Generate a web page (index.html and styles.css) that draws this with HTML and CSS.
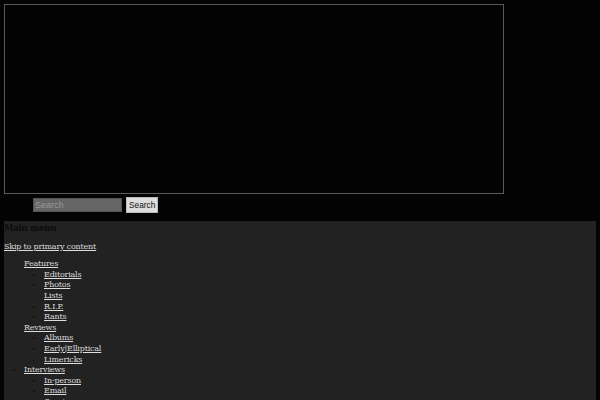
FILE: index.html
```html
<!DOCTYPE html>
<html>
<head>
<meta charset="utf-8">
<link rel="stylesheet" href="styles.css">
</head>
<body>
<div class="banner"></div>
<form class="search">
  <input class="search-input" type="text" placeholder="Search">
  <button class="search-btn" type="button">Search</button>
</form>
<nav class="menu">
  <h3 class="menu-title">Main menu</h3>
  <a class="skip" href="#">Skip to primary content</a>
  <ul class="top">
    <li><a href="#">Features</a>
      <ul class="sub">
        <li><a href="#">Editorials</a></li>
        <li><a href="#">Photos</a></li>
        <li><a href="#">Lists</a></li>
        <li><a href="#">R.I.P.</a></li>
        <li><a href="#">Rants</a></li>
      </ul>
    </li>
    <li><a href="#">Reviews</a>
      <ul class="sub">
        <li><a href="#">Albums</a></li>
        <li><a href="#">Early|Elliptical</a></li>
        <li><a href="#">Limericks</a></li>
      </ul>
    </li>
    <li><a href="#">Interviews</a>
      <ul class="sub">
        <li><a href="#">In-person</a></li>
        <li><a href="#">Email</a></li>
        <li><a href="#">On-air</a></li>
      </ul>
    </li>
  </ul>
</nav>
</body>
</html>
```
FILE: styles.css
```css
html, body {
  background: #030303;
}
body {
  margin: 4px;
  font-family: "DejaVu Serif", serif;
  font-size: 8px;
  letter-spacing: -0.2px;
  color: #111;
  overflow: hidden;
}
.banner {
  width: 498px;
  height: 188px;
  border: 1px solid #5a5a5a;
}
.search {
  display: flex;
  align-items: center;
  gap: 4px;
  padding-left: 29px;
  margin: 3px 0 8px;
}
.search-input {
  width: 89px;
  height: 14px;
  box-sizing: border-box;
  background: #666;
  border: 1px solid #555;
  padding: 0 1px;
  font-family: "Liberation Sans", sans-serif;
  font-size: 9px;
  letter-spacing: 0;
  color: #ddd;
}
.search-input::placeholder {
  color: #999;
}
.search-btn {
  height: 16px;
  padding: 0 2px;
  background: #ddd;
  border: 1px solid #bbb;
  font-family: "Liberation Sans", sans-serif;
  font-size: 8.3px;
  letter-spacing: 0;
  color: #111;
}
.menu {
  background: #222;
  width: 592px;
  padding-top: 2px;
  height: 400px;
  line-height: 10.6px;
}
.menu-title {
  margin: 0 0 8px;
  font-size: 8.5px;
  font-weight: bold;
  color: #0c0c0c;
}
.skip {
  display: block;
  color: #ddd;
}
a {
  color: #ddd;
  text-decoration: underline;
}
.top {
  list-style: disc;
  margin: 7px 0 0;
  padding-left: 20px;
}
.sub {
  list-style: disc;
  margin: 0;
  padding-left: 20px;
}
```
